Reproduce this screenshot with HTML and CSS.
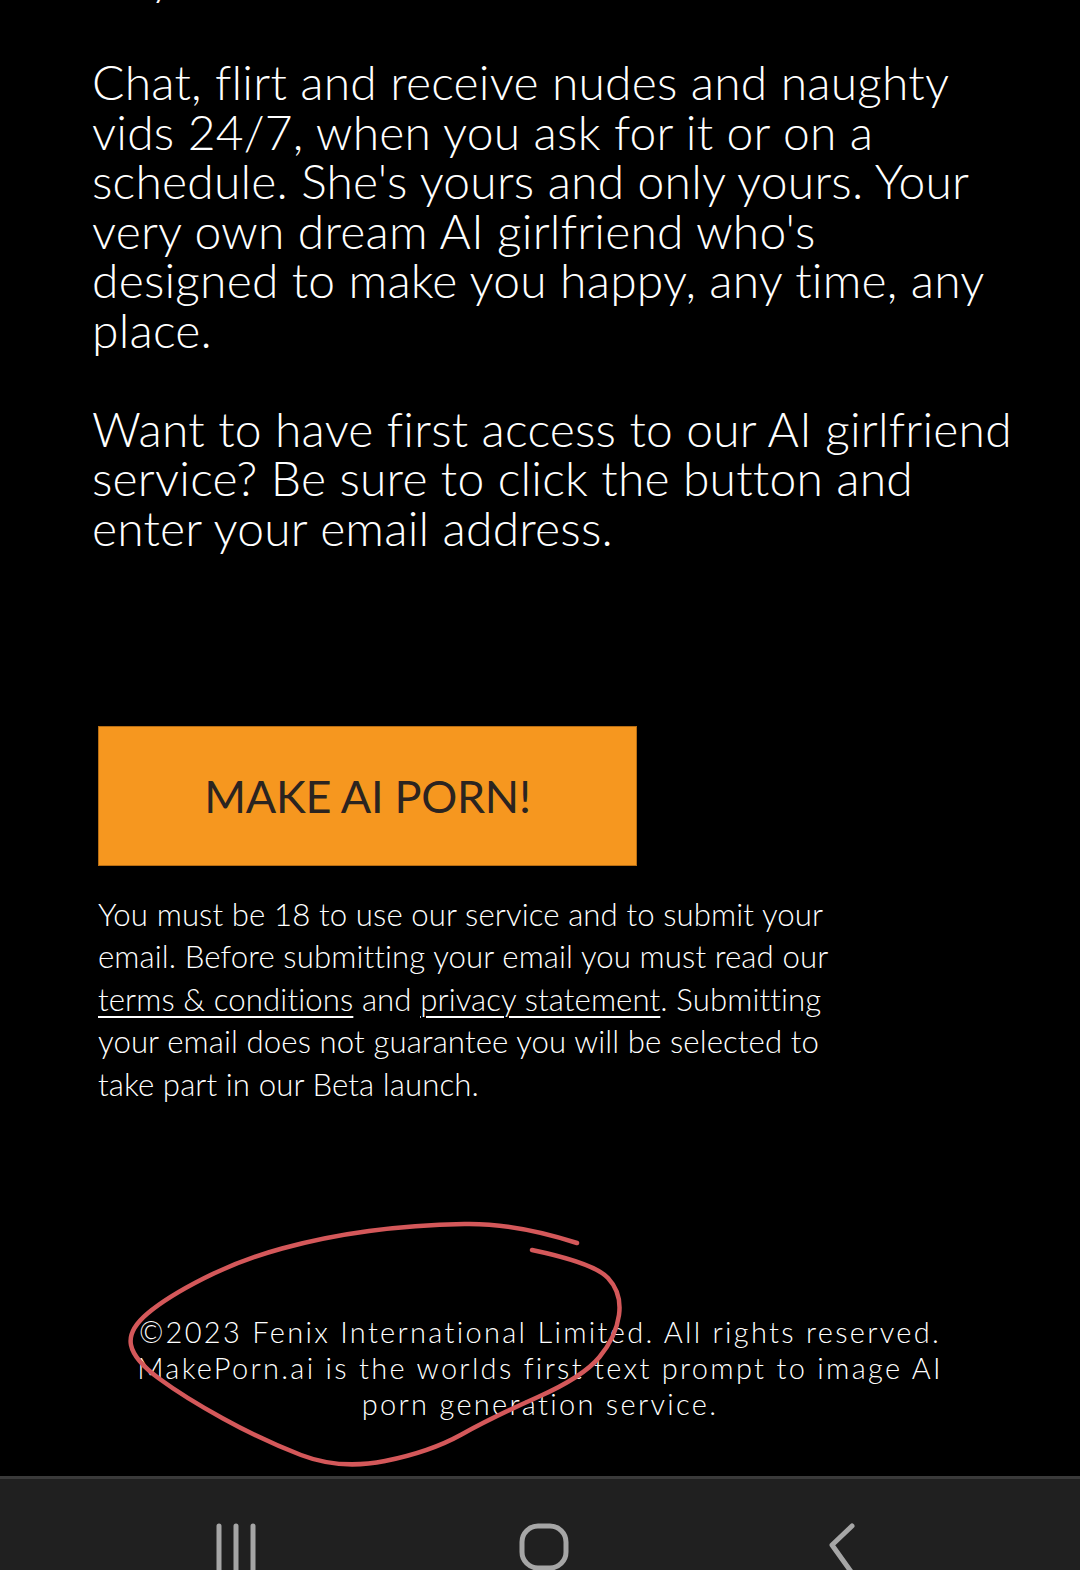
FILE: index.html
```html
<!DOCTYPE html>
<html lang="en">
<head>
<meta charset="utf-8">
<title>MakePorn.ai</title>
<link rel="stylesheet" href="styles.css">
</head>
<body>
<div class="screen">
  <main class="content">
    <p class="lead prev">Anytime.</p>
    <p class="lead">Chat, flirt and receive nudes and naughty<br>vids 24/7, when you ask for it or on a<br>schedule. She's yours and only yours. Your<br>very own dream AI girlfriend who's<br>designed to make you happy, any time, any<br>place.</p>
    <p class="lead">Want to have first access to our AI girlfriend<br>service? Be sure to click the button and<br>enter your email address.</p>
    <a class="cta" href="#">MAKE AI PORN!</a>
    <p class="note">You must be 18 to use our service and to submit your<br>email. Before submitting your email you must read our<br><a href="#">terms &amp; conditions</a> and <a href="#">privacy statement</a>. Submitting<br>your email does not guarantee you will be selected to<br>take part in our Beta launch.</p>
    <footer class="footer">©2023 Fenix International Limited. All rights reserved.<br>MakePorn.ai is the worlds first text prompt to image AI<br>porn generation service.</footer>
  </main>
  <nav class="navbar">
    <svg class="nav-icon recents" width="46" height="50" viewBox="0 0 46 50"><path d="M4 3V50M21 3V50M38 3V50" fill="none" stroke="#a6a6a6" stroke-width="5" stroke-linecap="round"/></svg>
    <svg class="nav-icon home" width="50" height="48" viewBox="0 0 50 48"><rect x="3" y="3" width="44" height="42" rx="16" fill="none" stroke="#a6a6a6" stroke-width="5"/></svg>
    <svg class="nav-icon back" width="30" height="50" viewBox="0 0 30 50"><path d="M25 3L5 22L25 50" fill="none" stroke="#a6a6a6" stroke-width="5" stroke-linecap="round" stroke-linejoin="round"/></svg>
  </nav>
  <svg class="scribble" width="1080" height="1570" viewBox="0 0 1080 1570">
    <path d="M577 1243 Q515 1223 464.5 1224 Q414 1225 369 1231 Q324 1237 282 1248.5 Q240 1260 203.5 1278.5 Q167 1297 147.5 1313.5 Q128 1330 131 1345 Q134 1360 159 1378.5 Q184 1397 223 1418.5 Q262 1440 301 1455 Q340 1470 385 1461 Q430 1452 461.5 1434.5 Q493 1417 538 1397 Q583 1377 599.5 1357 Q616 1337 619 1315 Q622 1293 608 1278 Q594 1263 532 1250" fill="none" stroke="#d4585a" stroke-width="4.5" stroke-linecap="round" stroke-linejoin="round"/>
  </svg>
</div>
</body>
</html>
```
FILE: styles.css
```css
* { box-sizing: border-box; }
html, body { margin: 0; padding: 0; background: #000; }
body { width: 1080px; height: 1570px; overflow: hidden; font-family: "Lato", "Noto Sans", sans-serif; color: #fff; }
.screen { position: relative; width: 1080px; height: 1570px; display: flex; flex-direction: column; }
.content { flex: 1; padding-left: 92px; display: flex; flex-direction: column; align-items: flex-start; }
.lead { margin: 0 0 49.5px; font-size: 48px; line-height: 49.5px; font-weight: 300; letter-spacing: 0.2px; white-space: nowrap; }
.prev { margin-top: -48px; margin-bottom: 55.5px; }
.cta { margin: 124px 0 0 6px; width: 539px; height: 140px; display: flex; align-items: center; justify-content: center; background: #f6971f; color: #2b2420; text-decoration: none; font-size: 45px; letter-spacing: -0.3px; border: 1px solid #b86e14; }
.note { margin: 27px 0 0 6px; font-size: 31.2px; line-height: 42.5px; font-weight: 300; letter-spacing: 0.1px; white-space: nowrap; }
.note a { color: #fff; text-decoration: underline; text-decoration-thickness: 2px; text-underline-offset: 5px; }
.footer { align-self: stretch; margin: 209px 92px 0 0; text-align: center; font-size: 29px; line-height: 36px; font-weight: 300; letter-spacing: 2.3px; white-space: nowrap; }
.navbar { height: 94px; flex: none; background: #202020; border-top: 3px solid #3a3a3a; display: flex; justify-content: space-between; align-items: flex-start; padding: 44px 223px 0 215px; }
.scribble { position: absolute; left: 0; top: 0; pointer-events: none; }
```
